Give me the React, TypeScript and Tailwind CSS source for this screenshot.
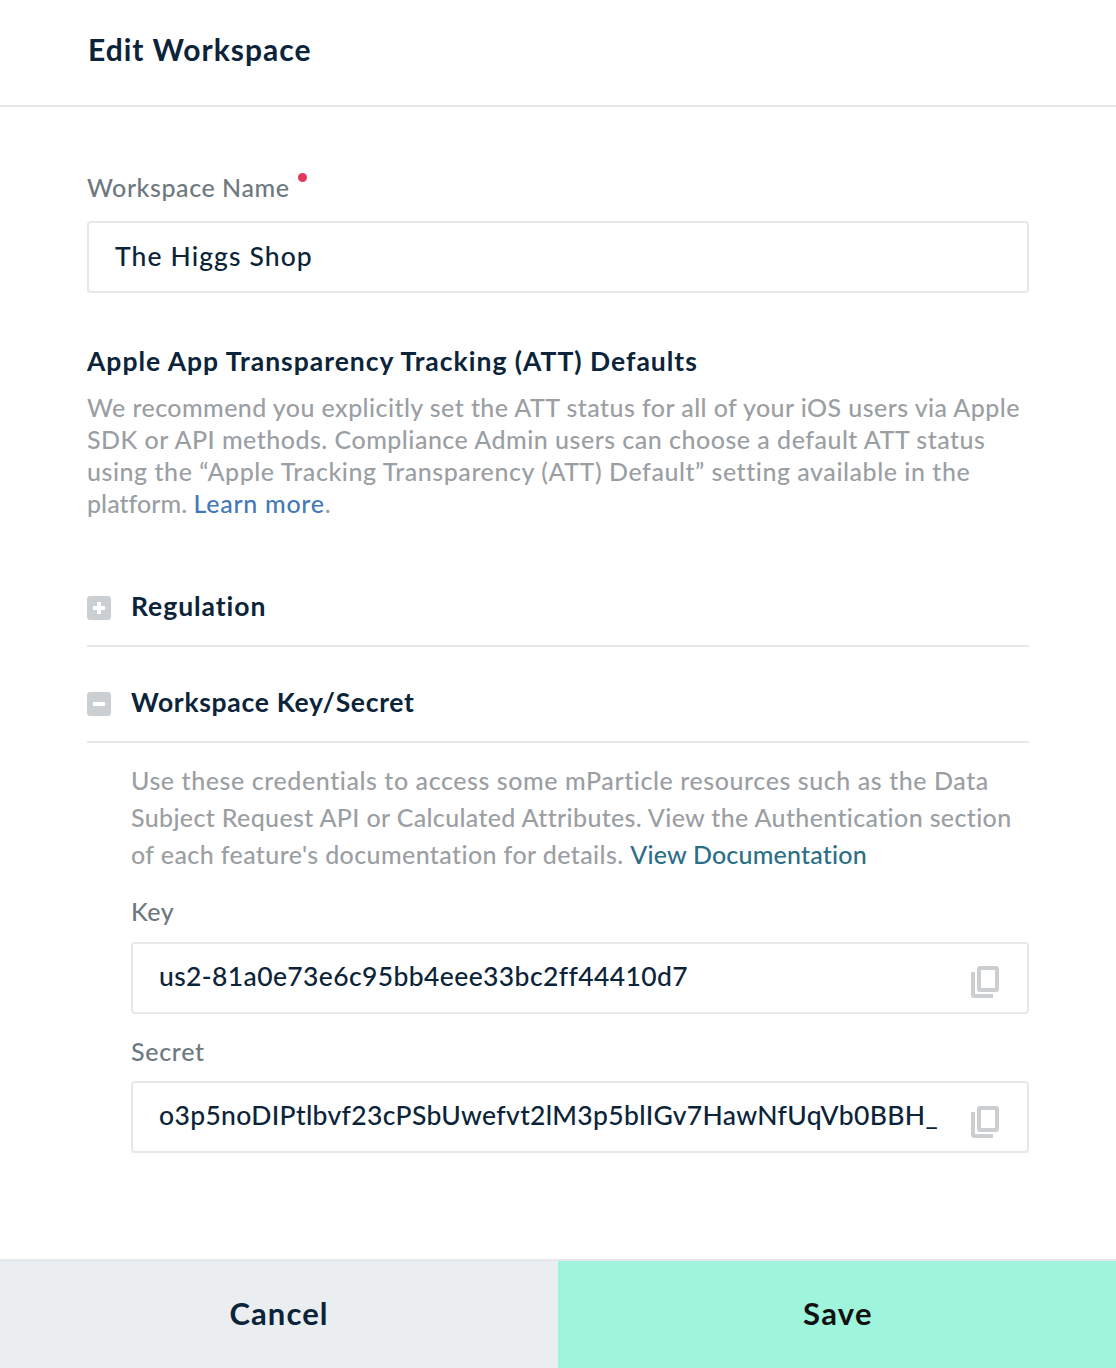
import React from "react";

function CopyIcon() {
  return (
    <svg width="28" height="32" viewBox="0 0 28 32" fill="none" stroke="#cccfd2" strokeWidth="4">
      <path
        d="M9 0h16a3 3 0 0 1 3 3v20a3 3 0 0 1-3 3H9a3 3 0 0 1-3-3V3a3 3 0 0 1 3-3zM10 4v18h14V4z"
        fill="#cccfd2"
        fillRule="evenodd"
        stroke="none"
      />
      <path d="M2 6v22.500a1.500 1.500 0 0 0 1.500 1.500H22" />
    </svg>
  );
}

function ToggleIcon({ open }: { open: boolean }) {
  return (
    <svg width="24" height="24" viewBox="0 0 24 24" className="mt-[6px] shrink-0">
      <rect width="24" height="24" rx="3" fill="#cccfd2" />
      <path d={open ? "M6 12h12" : "M6 12h12M12 6v12"} stroke="#fff" strokeWidth="4" />
    </svg>
  );
}

function Section({ open, title, tracking, className }: { open: boolean; title: string; tracking: string; className: string }) {
  return (
    <button className={`flex h-[57px] w-full items-start gap-5 border-b-2 border-[#e8e8e8] text-left ${className}`}>
      <ToggleIcon open={open} />
      <span className={`text-[26.5px] leading-8 font-bold whitespace-nowrap ${tracking}`}>{title}</span>
    </button>
  );
}

function SecretField({ value, tracking, iconOffset, className }: { value: string; tracking: string; iconOffset: string; className: string }) {
  return (
    <div className={`flex h-[72px] items-center justify-between rounded-[4px] border-2 border-[#e8e8e8] pr-7 pl-[26px] ${className}`}>
      <span className={`pb-1 text-[26.5px] leading-8 font-medium whitespace-nowrap ${tracking}`}>{value}</span>
      <button aria-label="Copy" className={iconOffset}>
        <CopyIcon />
      </button>
    </div>
  );
}

export default function App() {
  return (
    <div className="flex h-[1368px] w-full flex-col bg-white font-['Lato',sans-serif] text-[#0b2439]">
      <header className="h-[107px] shrink-0 border-b-2 border-[#e8e8e8] pt-[31px] pl-[88px]">
        <h1 className="text-[30px] leading-9 font-bold tracking-[1px]">Edit Workspace</h1>
      </header>

      <main className="flex-1 px-[87px] pt-16">
        <label className="flex gap-2 text-[25px] leading-8 font-medium text-[#6d797f]">
          <span className="tracking-[0.56px]">Workspace Name</span>
          <span className="mt-[1.500px] h-[9px] w-[9px] rounded-full bg-[#e03a58]" />
        </label>
        <div className="mt-[18px] flex h-[72px] items-center rounded-[4px] border-2 border-[#e8e8e8] pl-[26px]">
          <span className="pb-[2px] text-[26.5px] leading-8 font-medium tracking-[1.1px]">The Higgs Shop</span>
        </div>

        <h2 className="mt-[52px] text-[26.5px] leading-8 font-bold tracking-[0.99px] whitespace-nowrap">
          Apple App Transparency Tracking (ATT) Defaults
        </h2>
        <p className="mt-[14px] text-[25px] leading-8 font-medium whitespace-nowrap text-[#9b9fa3]">
          <span className="block tracking-[0.425px]">We recommend you explicitly set the ATT status for all of your iOS users via Apple</span>
          <span className="block tracking-[0.49px]">SDK or API methods. Compliance Admin users can choose a default ATT status</span>
          <span className="block tracking-[0.54px]">using the “Apple Tracking Transparency (ATT) Default” setting available in the</span>
          <span className="block tracking-[0.05px]">
            platform. <a className="tracking-[0.7px] text-[#4379b9]">Learn more</a>.
          </span>
        </p>

        <Section open={false} title="Regulation" tracking="tracking-[0.95px]" className="mt-[71px]" />
        <Section open title="Workspace Key/Secret" tracking="tracking-[0.69px]" className="mt-[39px]" />

        <div className="pl-11">
          <p className="mt-[19px] text-[25px] leading-[37px] font-medium whitespace-nowrap text-[#9b9fa3]">
            <span className="block tracking-[0.575px]">Use these credentials to access some mParticle resources such as the Data</span>
            <span className="block tracking-[0.35px]">Subject Request API or Calculated Attributes. View the Authentication section</span>
            <span className="block tracking-[0.39px]">
              of each feature's documentation for details. <a className="tracking-[0.2px] text-[#2b6f86]">View Documentation</a>
            </span>
          </p>
          <div className="mt-[22px] text-[25px] leading-8 font-medium tracking-[0.6px] text-[#6d797f]">Key</div>
          <SecretField
            value="us2-81a0e73e6c95bb4eee33bc2ff44410d7"
            tracking="tracking-[0.38px]"
            iconOffset="mt-2"
            className="mt-[15px]"
          />
          <div className="mt-[21px] text-[25px] leading-8 font-medium tracking-[0.7px] text-[#6d797f]">Secret</div>
          <SecretField
            value="o3p5noDIPtlbvf23cPSbUwefvt2lM3p5blIGv7HawNfUqVb0BBH_"
            tracking="tracking-[0.34px]"
            iconOffset="mt-2.5"
            className="mt-[14px]"
          />
        </div>
      </main>

      <footer className="grid h-[109px] shrink-0 grid-cols-2 border-t-2 border-[#e8e8e8] text-[31px] leading-9 font-bold">
        <button className="bg-[#eaeef1] pb-[3px] tracking-[1.1px]">Cancel</button>
        <button className="bg-[#9ff4dc] pb-[3px] pl-[2px] tracking-[1.3px] text-[#111]">Save</button>
      </footer>
    </div>
  );
}
